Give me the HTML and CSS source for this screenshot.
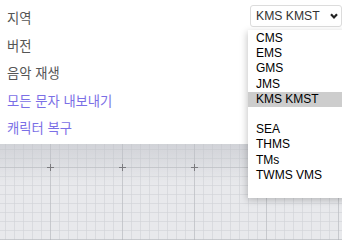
FILE: index.html
```html
<!DOCTYPE html>
<html lang="ko">
<head>
<meta charset="utf-8">
<link rel="stylesheet" href="styles.css">
</head>
<body>
<div class="page">
  <div class="panel">
    <div class="row">
      <span class="label">지역</span>
      <div class="select">
        <span class="select-text">KMS KMST</span>
        <svg class="chev" width="8" height="6" viewBox="0 0 8 6"><polyline points="1,1.2 4,4.4 7,1.2" fill="none" stroke="#222" stroke-width="2.2"/></svg>
      </div>
    </div>
    <div class="row">
      <span class="label">버전</span>
      <div class="select">
        <span class="select-text">&nbsp;</span>
      </div>
    </div>
    <div class="row"><span class="label">음악 재생</span></div>
    <div class="row"><a class="link">모든 문자 내보내기</a></div>
    <div class="row"><a class="link">캐릭터 복구</a></div>
  </div>
  <div class="canvas">
    <span class="cross c1"></span>
    <span class="cross c2"></span>
    <span class="cross c3"></span>
  </div>
  <ul class="popup">
    <li>CMS</li>
    <li>EMS</li>
    <li>GMS</li>
    <li>JMS</li>
    <li class="active">KMS KMST</li>
    <li>&nbsp;</li>
    <li>SEA</li>
    <li>THMS</li>
    <li>TMs</li>
    <li>TWMS VMS</li>
  </ul>
</div>
</body>
</html>
```
FILE: styles.css
```css
html, body {
  margin: 0;
  padding: 0;
  height: 100%;
  background: #e8e9ec;
  overflow: hidden;
}
.page {
  position: relative;
  width: 342px;
  height: 100%;
  min-height: 202px;
  display: grid;
  grid-template-rows: 143.5px 1fr;
  background: #e8e9ec;
}
.panel {
  padding: 4px 0 2px 7px;
  box-sizing: border-box;
  background: #fff;
  display: flex;
  flex-direction: column;
}
.row {
  height: 27.5px;
  flex: none;
  display: flex;
  align-items: center;
  justify-content: space-between;
  font-family: "Noto Sans CJK KR", "Noto Sans", sans-serif;
  font-size: 13.3px;
}
.label {
  color: #555;
}
.link {
  color: #7b6fe6;
  cursor: pointer;
}
.select {
  width: 92px;
  height: 22px;
  box-sizing: border-box;
  margin-top: -4px;
  border: 1px solid #dcdcdc;
  border-radius: 3px;
  display: flex;
  align-items: center;
  padding-left: 5px;
  font-family: "Liberation Sans", Arial, sans-serif;
  font-size: 12.2px;
  color: #333;
}
.select-text {
  flex: 1;
}
.chev {
  margin-right: 3px;
}
.canvas {
  position: relative;
  background-color: #e8e9ec;
  background-image:
    linear-gradient(to bottom, rgba(190,192,199,0.55), rgba(190,192,199,0) 40px),
    linear-gradient(to right, rgba(165,167,173,0.35) 1px, transparent 1px),
    linear-gradient(to bottom, rgba(165,167,173,0.35) 1px, transparent 1px),
    linear-gradient(to right, rgba(208,210,215,0.6) 1px, transparent 1px),
    linear-gradient(to bottom, rgba(208,210,215,0.6) 1px, transparent 1px);
  background-size: 100% 100%, 72px 72px, 72px 72px, 9px 9px, 9px 9px;
  background-position: 0 0, 50px 0, 0 23px, 5px 0, 0 5px;
}
.cross {
  position: absolute;
  width: 7px;
  height: 7px;
  top: 20px;
  background:
    linear-gradient(#7b7b7f, #7b7b7f) center / 7px 1px no-repeat,
    linear-gradient(#7b7b7f, #7b7b7f) center / 1px 7px no-repeat;
}
.c1 { left: 47px; }
.c2 { left: 119px; }
.c3 { left: 191px; }
.popup {
  position: absolute;
  left: 248px;
  top: 30px;
  width: 100px;
  height: 168px;
  box-sizing: border-box;
  margin: 0;
  padding: 1px 0 0 0;
  list-style: none;
  background: #fff;
  box-shadow: -1px 2px 7px rgba(0,0,0,0.22);
  font-family: "Liberation Sans", Arial, sans-serif;
  font-size: 12px;
  color: #000;
}
.popup li {
  height: 15.2px;
  line-height: 15.2px;
  padding-left: 8px;
  white-space: nowrap;
}
.popup li.active {
  background: #cdcdcd;
}
```
